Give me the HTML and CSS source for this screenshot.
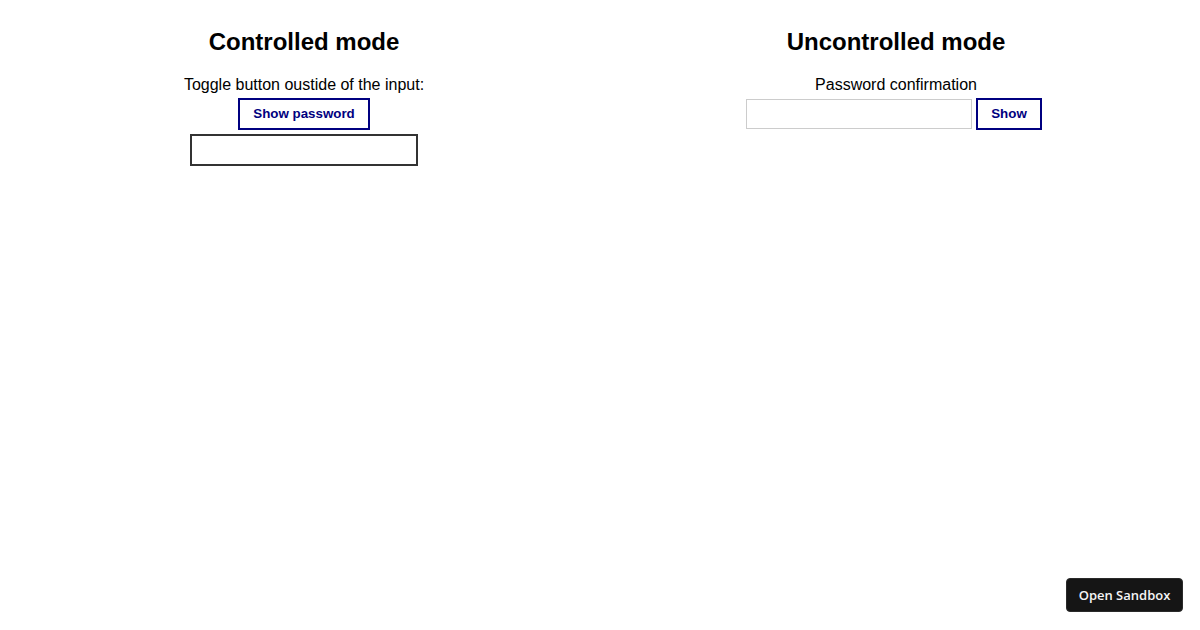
FILE: index.html
```html
<!DOCTYPE html>
<html>
<head>
<meta charset="utf-8">
<link rel="stylesheet" href="styles.css">
</head>
<body>
<div class="page">
  <section class="col">
    <h2 class="title">Controlled mode</h2>
    <label class="label" for="pw1">Toggle button oustide of the input:</label>
    <button class="btn">Show password</button>
    <input class="input-dark" id="pw1" type="password">
  </section>
  <section class="col">
    <h2 class="title">Uncontrolled mode</h2>
    <label class="label" for="pw2">Password confirmation</label>
    <div class="row">
      <input class="input-light" id="pw2" type="password">
      <button class="btn">Show</button>
    </div>
  </section>
</div>
<button class="sandbox">Open Sandbox</button>
</body>
</html>
```
FILE: styles.css
```css
body {
  margin: 8px;
  font-family: "Liberation Sans", Arial, sans-serif;
  background: #fff;
  color: #000;
}
.page {
  display: flex;
}
.col {
  flex: 1 1 0;
  display: flex;
  flex-direction: column;
  align-items: center;
}
.title {
  font-size: 24px;
  font-weight: bold;
  margin: 20px 0 20px;
  line-height: 27.6px;
}
.label {
  font-size: 16px;
  line-height: 18.4px;
  margin-bottom: 4px;
}
.btn {
  box-sizing: border-box;
  height: 32px;
  padding: 0 13px 2px;
  border: 2px solid #000080;
  background: #fff;
  color: #000080;
  font-family: "Liberation Sans", Arial, sans-serif;
  font-weight: bold;
  font-size: 13.333px;
  border-radius: 0;
}
.input-dark {
  box-sizing: border-box;
  width: 228px;
  height: 32px;
  margin-top: 4px;
  border: 2px solid #333;
  padding: 0 4px;
  background: #fff;
}
.row {
  display: flex;
  align-items: center;
  gap: 4px;
  padding-right: 4px;
}
.input-light {
  box-sizing: border-box;
  width: 226px;
  height: 30px;
  border: 1px solid #ccc;
  padding: 0 4px;
  background: #fff;
}
.sandbox {
  position: fixed;
  right: 17px;
  bottom: 18px;
  box-sizing: border-box;
  width: 117px;
  height: 34px;
  background: #151515;
  color: #f5f5f5;
  border: 1px solid #2a2a2a;
  border-radius: 4px;
  font-family: "Open Sans", "Noto Sans", sans-serif;
  font-size: 13px;
  font-weight: 600;
  padding: 0;
}
```
